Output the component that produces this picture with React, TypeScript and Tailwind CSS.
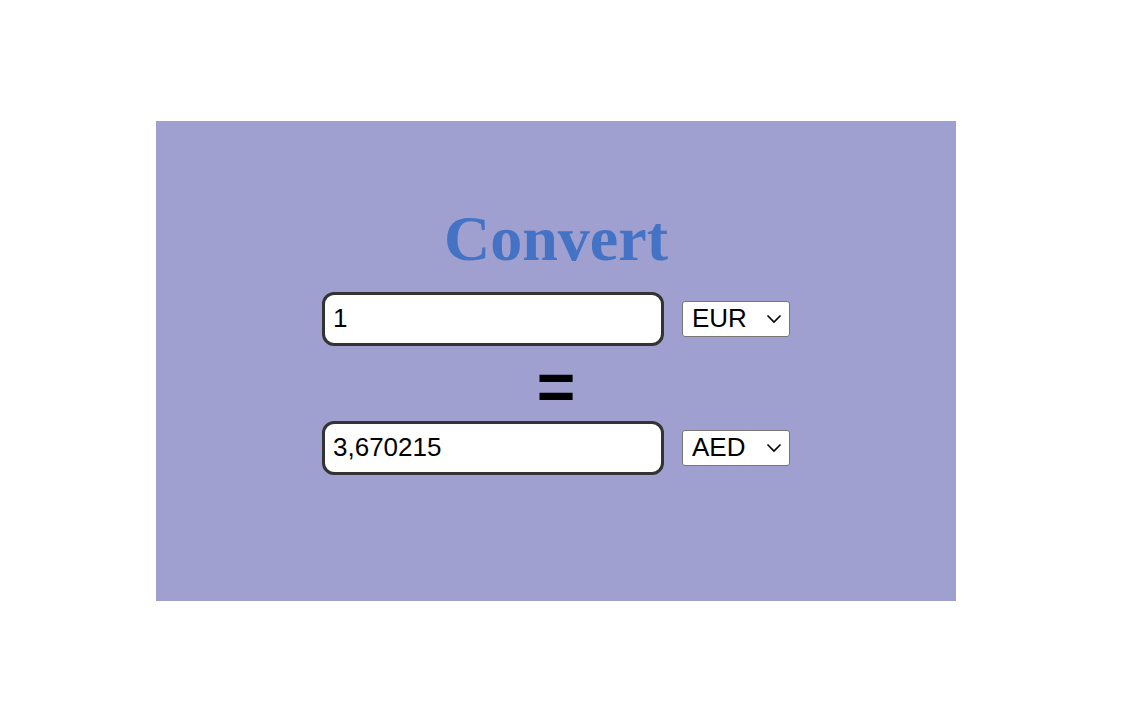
import { useState } from "react";

const currencies = ["EUR", "AED", "USD", "GBP", "JPY"];

function CurrencySelect({ value, onChange }: { value: string; onChange: (v: string) => void }) {
  return (
    <div className="relative ml-[18px]">
      <select
        value={value}
        onChange={(event) => onChange(event.target.value)}
        className="h-[36px] w-[108px] appearance-none rounded-[3px] border border-[#767676] bg-white pb-[2px] pl-[9px] text-[26px] leading-none text-black outline-none"
        style={{ fontFamily: '"Liberation Sans", Arial, sans-serif' }}
      >
        {currencies.map((c) => (
          <option key={c}>{c}</option>
        ))}
      </select>
      <svg
        className="pointer-events-none absolute right-[8px] top-[13px]"
        width="16"
        height="10"
        viewBox="0 0 16 10"
        fill="none"
        stroke="black"
        strokeWidth="1.6"
      >
        <path d="M1.5 1.5 L8 8 L14.5 1.5" />
      </svg>
    </div>
  );
}

function AmountRow({
  amount,
  currency,
  onCurrency
}: {
  amount: string;
  currency: string;
  onCurrency: (v: string) => void;
}) {
  return (
    <div className="flex items-center">
      <input
        value={amount}
        readOnly
        className="h-[54px] w-[342px] rounded-[12px] border-[3px] border-[#333333] bg-white px-[8px] pb-[2px] text-[26px] text-black outline-none"
        style={{ fontFamily: '"Liberation Sans", Arial, sans-serif' }}
      />
      <CurrencySelect value={currency} onChange={onCurrency} />
    </div>
  );
}

export default function App() {
  const [from, setFrom] = useState("EUR");
  const [to, setTo] = useState("AED");

  return (
    <div className="min-h-screen bg-white pl-[156px] pt-[121px]">
      <div className="flex h-[480px] w-[800px] flex-col items-center bg-[#a0a0d0] pt-[82px]">
        <h1
          className="text-[64px] font-bold leading-[71px] text-[#4472c4]"
          style={{ fontFamily: '"Liberation Serif", "Times New Roman", serif' }}
        >
          Convert
        </h1>
        <div className="mt-[18px]">
          <AmountRow amount="1" currency={from} onCurrency={setFrom} />
        </div>
        <div
          className="flex h-[75px] items-center justify-center pt-[6px] text-[66px] font-bold leading-none text-black"
          style={{ fontFamily: '"Liberation Sans", Arial, sans-serif' }}
        >
          =
        </div>
        <AmountRow amount="3,670215" currency={to} onCurrency={setTo} />
      </div>
    </div>
  );
}
